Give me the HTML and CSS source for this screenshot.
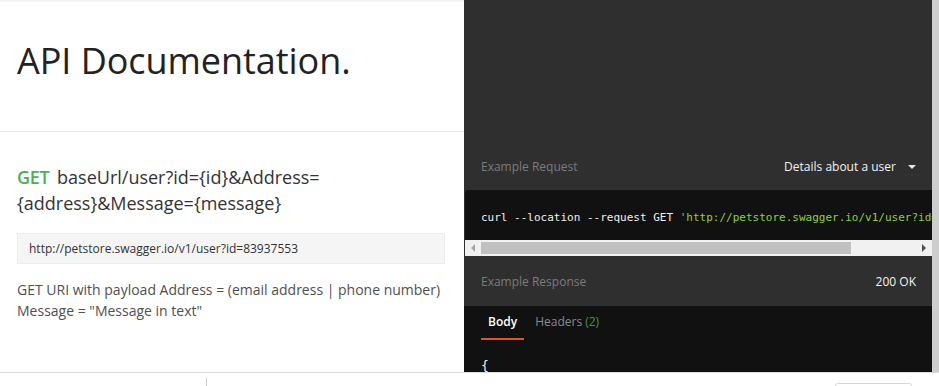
FILE: index.html
```html
<!DOCTYPE html>
<html>
<head>
    <title>API Documentation</title>
    <meta charset="UTF-8">
    <meta name="viewport" content="width=device-width, initial-scale=1.0">
    <link rel="stylesheet" href="styles.css">
</head>
<body>
    <div class="page">
        <div class="main">
            <div class="docs">
                <div class="docs-header">
                    <h1>API Documentation.</h1>
                </div>
                <div class="request">
                    <h2 class="request-title"><span class="method">GET</span> baseUrl/user?id={id}&amp;Address=<wbr>{address}&amp;Message={message}</h2>
                    <div class="request-url">http://petstore.swagger.io/v1/user?id=83937553</div>
                    <p class="request-desc">GET URI with payload Address = (email address | phone number)<br>Message = "Message in text"</p>
                </div>
            </div>

            <div class="examples">
                <div class="example-head first">
                    <span class="example-label">Example Request</span>
                    <span class="example-select">Details about a user <span class="caret"></span></span>
                </div>
                <div class="code-block">
                    <pre class="code">curl --location --request GET <span class="str">'http://petstore.swagger.io/v1/user?id=83937553&amp;Address=address&amp;Message=message'</span></pre>
                </div>
                <div class="hscroll">
                    <span class="arrow arrow-left"></span>
                    <div class="hscroll-track"><div class="hscroll-thumb"></div></div>
                    <span class="arrow arrow-right"></span>
                </div>
                <div class="example-head">
                    <span class="example-label">Example Response</span>
                    <span class="example-status">200 OK</span>
                </div>
                <div class="response">
                    <div class="tabs">
                        <span class="tab active">Body</span>
                        <span class="tab">Headers <span class="count">(2)</span></span>
                    </div>
                    <pre class="code body-code">{</pre>
                </div>
            </div>

            <div class="vscroll"></div>
        </div>

        <div class="footer">
            <div class="footer-left"></div>
            <div class="footer-divider"></div>
            <div class="footer-right">
                <span class="footer-btn"></span>
            </div>
        </div>
    </div>
</body>
</html>
```

FILE: styles.css
```css
html, body {
    margin: 0;
    padding: 0;
    height: 386px;
    overflow: hidden;
    background-color: #fff;
}
body {
    font-family: 'Open Sans', 'Noto Sans', sans-serif;
    color: #333;
}
.page {
    display: flex;
    flex-direction: column;
    width: 939px;
    height: 386px;
}
.main {
    display: flex;
    height: 372px;
    flex-shrink: 0;
}

/* left column */
.docs {
    width: 464px;
    flex-shrink: 0;
    box-shadow: inset 0 3px 3px -2px rgba(0, 0, 0, 0.08);
}
.docs-header {
    height: 132px;
    box-sizing: border-box;
    padding: 36px 17px 0;
    border-bottom: 1px solid #e6e6e6;
}
.docs-header h1 {
    margin: 0;
    font-size: 36px;
    line-height: 49px;
    font-weight: 400;
    color: #222;
    letter-spacing: -0.05px;
}
.request {
    padding: 32px 19px 0 17px;
}
.request-title {
    margin: 0;
    font-size: 18px;
    line-height: 26px;
    font-weight: 400;
    color: #333;
}
.method {
    color: #4caf50;
    font-weight: 600;
    margin-right: 3px;
    letter-spacing: -0.3px;
}
.request-url {
    margin-top: 17px;
    height: 31px;
    box-sizing: border-box;
    padding: 0 11px;
    line-height: 29px;
    font-size: 12px;
    color: #333;
    background-color: #f5f5f5;
    border: 1px solid #ececec;
}
.request-desc {
    margin: 15px 0 0;
    font-size: 14px;
    line-height: 21px;
    color: #505050;
}

/* right column */
.examples {
    width: 468px;
    flex-shrink: 0;
    background-color: #2f2f2f;
    padding-top: 146px;
    box-sizing: border-box;
    overflow: hidden;
}
.example-head {
    display: flex;
    justify-content: space-between;
    align-items: center;
    height: 50px;
    padding: 0 16px 0 17px;
    font-size: 12px;
}
.example-head.first {
    height: 44px;
    box-sizing: border-box;
    padding-bottom: 4px;
}
.example-label {
    color: #7b7b7b;
}
.example-select,
.example-status {
    color: #f2f2f2;
}
.caret {
    display: inline-block;
    width: 0;
    height: 0;
    margin-left: 9px;
    vertical-align: 2px;
    border-left: 4px solid transparent;
    border-right: 4px solid transparent;
    border-top: 4px solid #e8e8e8;
}
.code-block {
    width: 451px;
    margin-left: 1px;
    background-color: #111;
    height: 50px;
    box-sizing: content-box;
    padding: 0 0 0 16px;
    overflow: hidden;
    border-radius: 3px 0 0 0;
}
.code {
    margin: 0;
    font-family: 'DejaVu Sans Mono', 'Liberation Mono', monospace;
    font-size: 11px;
    line-height: 52px;
    padding-top: 2px;
    color: #f0f0f0;
    white-space: pre;
}
.str {
    color: #8fcf3c;
}
.hscroll {
    display: flex;
    align-items: center;
    height: 16px;
    margin-left: 1px;
    background-color: #f1f1f1;
}
.hscroll-track {
    flex: 1;
    height: 12px;
}
.hscroll-thumb {
    width: 370px;
    height: 12px;
    background-color: #c1c1c1;
}
.arrow {
    width: 0;
    height: 0;
    border-top: 4px solid transparent;
    border-bottom: 4px solid transparent;
    margin: 0 6px;
}
.arrow-left {
    border-right: 4px solid #a3a3a3;
}
.arrow-right {
    border-left: 4px solid #505050;
}
.response {
    background-color: #111;
    height: 66px;
    overflow: hidden;
}
.tabs {
    display: flex;
    gap: 11px;
    padding: 0 17px;
    height: 34px;
    align-items: flex-end;
    font-size: 12px;
}
.tab {
    color: #8a8a8a;
    padding: 0 0 9px;
    line-height: 18px;
}
.tab.active {
    color: #fff;
    font-weight: 600;
    padding: 0 7px 7px;
    border-bottom: 2px solid #e0561b;
}
.count {
    color: #3f9b3f;
}
.body-code {
    padding: 0 17px;
    line-height: 20px;
    margin-top: 16px;
    font-size: 13px;
}
.vscroll {
    width: 7px;
    flex-shrink: 0;
    background-color: #cdcdcd;
}

/* footer */
.footer {
    display: flex;
    flex: 1;
    border-top: 1px solid #dcdcdc;
    background-color: #fff;
}
.footer-left {
    width: 206px;
}
.footer-divider {
    width: 1px;
    height: 8px;
    margin-top: 5px;
    background-color: #ccc;
}
.footer-right {
    flex: 1;
    display: flex;
    justify-content: flex-end;
    padding-right: 27px;
}
.footer-btn {
    width: 75px;
    height: 10px;
    margin-top: 10px;
    border: 1px solid #d6d6d6;
    border-radius: 3px;
}
```
